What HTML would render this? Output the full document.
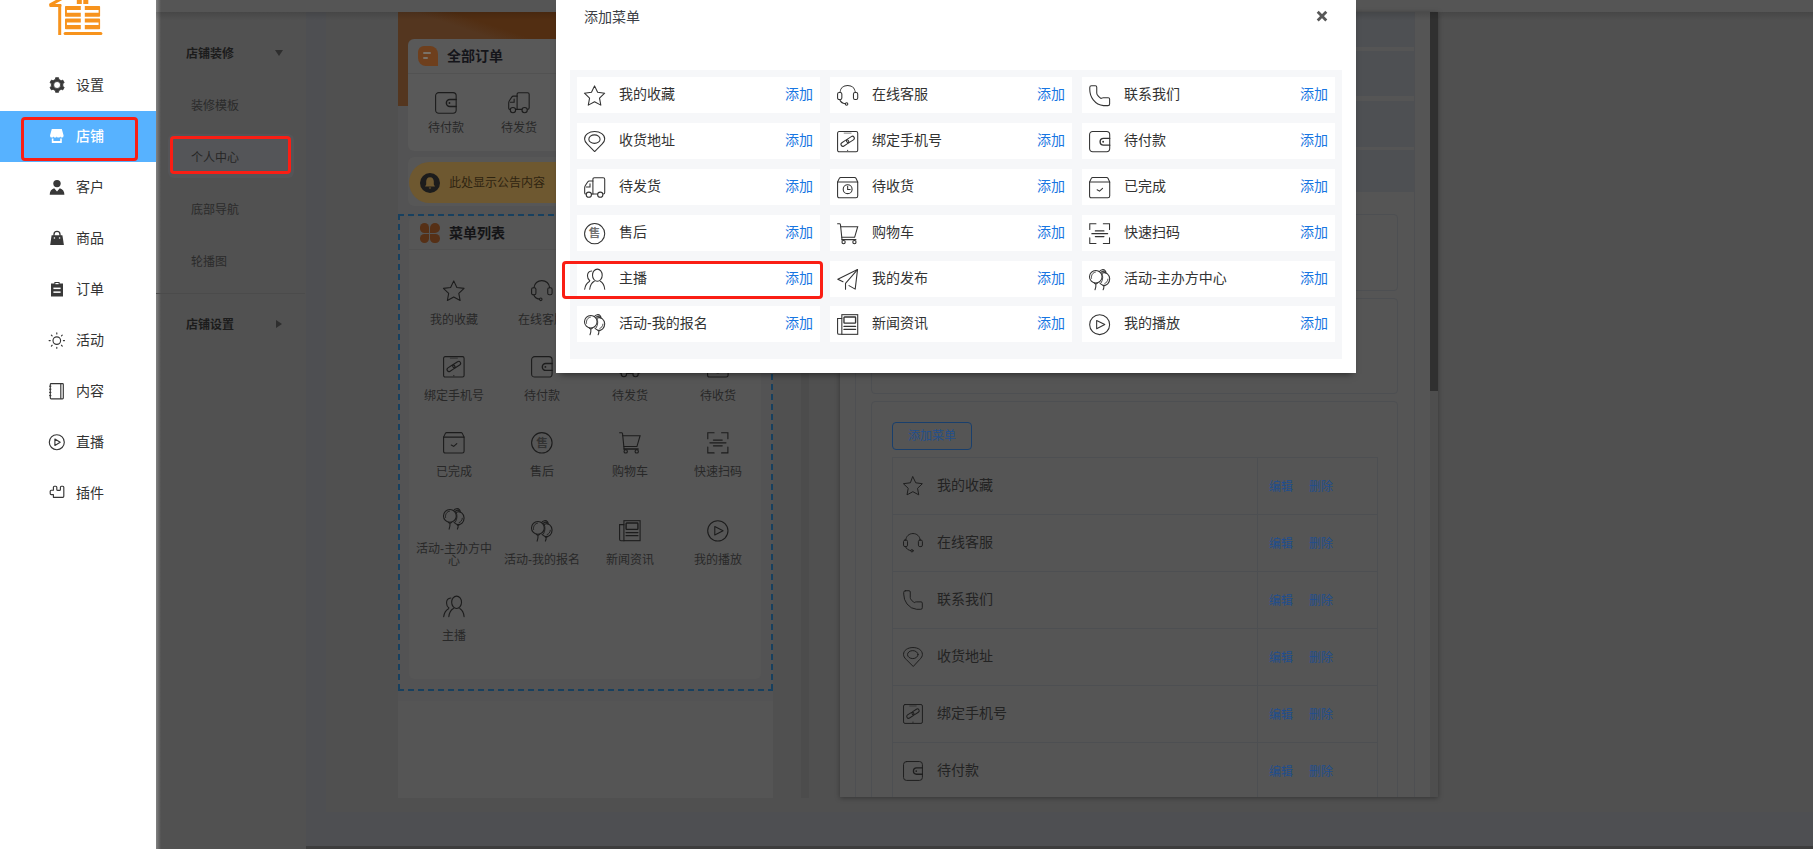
<!DOCTYPE html>
<html lang="zh-CN"><head><meta charset="utf-8"><title>添加菜单</title>
<style>
*{box-sizing:border-box;margin:0;padding:0}
html,body{width:1813px;height:849px;overflow:hidden}
body{position:relative;background:#515151;font-family:"Liberation Sans","Noto Sans CJK SC",sans-serif;font-size:14px;color:#333;-webkit-font-smoothing:antialiased}
.a{position:absolute}
.ic{position:absolute;overflow:visible}
.t{position:absolute;white-space:nowrap;line-height:20px;height:20px}
.shou{position:absolute;text-align:center;font-weight:700}
.c{text-align:center}
</style></head><body>

<div class="a" style="left:156px;top:0;width:1657px;height:12px;background:#555"></div>
<div class="a" style="left:306px;top:12px;width:1507px;height:834px;background:#4e4f52"></div>
<div class="a" style="left:326px;top:12px;width:1487px;height:800px;background:#505050"></div>
<div class="a" style="left:156px;top:12px;width:150px;height:837px;background:#515151"></div>
<div class="a" style="left:306px;top:846px;width:1507px;height:3px;background:#3d3d3d"></div>
<div class="a" style="left:156px;top:0;width:5px;height:849px;background:linear-gradient(90deg,#828282,rgba(130,130,130,0))"></div>
<div class="a" style="left:168px;top:134px;width:126px;height:44px;border-radius:6px;background:#545558"></div>
<div class="t" style="left:186px;top:44px;font-size:12px;color:#1c1c1c;font-weight:700;">店铺装修</div>
<div class="a" style="left:275px;top:50px;border-left:4.5px solid transparent;border-right:4.5px solid transparent;border-top:6px solid #2e2e2e"></div>
<div class="t" style="left:191px;top:96px;font-size:12px;color:#2b2b2b;">装修模板</div>
<div class="t" style="left:191px;top:148px;font-size:12px;color:#262626;">个人中心</div>
<div class="t" style="left:191px;top:200px;font-size:12px;color:#2b2b2b;">底部导航</div>
<div class="t" style="left:191px;top:252px;font-size:12px;color:#2b2b2b;">轮播图</div>
<div class="a" style="left:156px;top:293px;width:149px;height:1px;background:#4b4b4b"></div>
<div class="t" style="left:186px;top:315px;font-size:12px;color:#1c1c1c;font-weight:700;">店铺设置</div>
<div class="a" style="left:276px;top:320px;border-top:4.5px solid transparent;border-bottom:4.5px solid transparent;border-left:6px solid #2e2e2e"></div>
<div class="a" style="left:170px;top:136px;width:121px;height:38px;border:3px solid #fa1e14;border-radius:4px"></div>
<div class="a" style="left:398px;top:12px;width:375px;height:786px;background:#535354"></div>
<div class="a" style="left:398px;top:12px;width:375px;height:94px;background:linear-gradient(18.7deg,#54361f 45%,#522e12 51%)"></div>
<div class="a" style="left:408px;top:39px;width:354px;height:112px;border-radius:6px;background:#595959"></div>
<div class="a" style="left:408px;top:73px;width:354px;height:1px;background:#525252"></div>
<div class="a" style="left:418px;top:46px;width:20px;height:20px;border-radius:6px 8px 0 8px;background:#6e3f1d"></div>
<div class="a" style="left:423px;top:52px;width:8px;height:2px;border-radius:1px;background:#7a7268"></div>
<div class="a" style="left:423px;top:56.5px;width:5px;height:2px;border-radius:1px;background:#7a7268"></div>
<div class="t" style="left:447px;top:45.8px;font-weight:700;color:#15151a">全部订单</div>
<svg class="ic" style="left:435.26px;top:92.06px;color:#1c1c1c" width="21.78" height="21.78" viewBox="0 0 22 22"><g fill="none" stroke="currentColor" stroke-width="1.1" stroke-linecap="round"><rect x="0.6" y="0.6" width="20.8" height="20.8" rx="3.2"/><path d="M21.4 7.6H15A3.5 3.5 0 0 0 15 14.6H21.4" stroke-width="1.45"/><circle cx="14.6" cy="11.1" r="0.95" fill="currentColor" stroke="none"/></g></svg>
<svg class="ic" style="left:508.26px;top:92.06px;color:#1c1c1c" width="21.78" height="21.78" viewBox="0 0 22 22"><g fill="none" stroke="currentColor" stroke-width="1.1" stroke-linecap="round"><path d="M9.2 17.6V2.4Q9.2 0.8 10.8 0.8H19.8Q21.4 0.8 21.4 2.4V16Q21.4 17.6 20 17.6"/><path d="M9.2 4.2H5.6Q4.4 4.2 3.6 5.4L1.4 8.8Q0.7 9.9 0.7 11V16.4Q0.7 17.6 1.9 17.6H2.2M7.8 17.6H14"/><path d="M2.4 10.4H6.2V7"/><circle cx="5" cy="18.3" r="2.7"/><circle cx="16.8" cy="18.3" r="2.7"/></g></svg>
<div class="t c" style="left:402px;top:118px;width:88px;font-size:12px;color:#282828">待付款</div>
<div class="t c" style="left:475px;top:118px;width:88px;font-size:12px;color:#282828">待发货</div>
<div class="a" style="left:408px;top:157px;width:354px;height:49px;border-radius:6px;background:#575757"></div>
<div class="a" style="left:409px;top:162px;width:353px;height:41px;border-radius:21px 0 0 21px;background:#6e5830"></div>
<div class="a" style="left:420px;top:173px;width:20px;height:20px;border-radius:10px;background:#1c1c1c"></div>
<svg class="ic" style="left:420px;top:173px" width="20" height="20" viewBox="0 0 20 20"><path fill="#6e5830" d="M10 4.2C7.4 4.2 6.2 6.2 6.2 8.6V11.6L5 13.4H15L13.8 11.6V8.6C13.8 6.2 12.6 4.2 10 4.2ZM8.8 14.4H11.2Q11.2 15.6 10 15.6Q8.8 15.6 8.8 14.4Z"/></svg>
<div class="t" style="left:449px;top:173px;font-size:12px;color:#2e2410">此处显示公告内容</div>
<div class="a" style="left:398px;top:214px;width:375px;height:2px;background:repeating-linear-gradient(90deg,#17405f 0 6px,transparent 6px 10px)"></div>
<div class="a" style="left:398px;top:689px;width:375px;height:2px;background:repeating-linear-gradient(90deg,#17405f 0 6px,transparent 6px 10px)"></div>
<div class="a" style="left:398px;top:214px;width:2px;height:477px;background:repeating-linear-gradient(180deg,#17405f 0 6px,transparent 6px 10px)"></div>
<div class="a" style="left:771px;top:214px;width:2px;height:477px;background:repeating-linear-gradient(180deg,#17405f 0 6px,transparent 6px 10px)"></div>
<div class="a" style="left:409px;top:216px;width:352px;height:463px;border-radius:5px;background:#565656"></div>
<div class="a" style="left:409px;top:249px;width:352px;height:1px;background:#515151"></div>
<div class="a" style="left:419.8px;top:223px;width:9.6px;height:9.6px;border-radius:5px 5px 0 5px;background:#563016"></div>
<div class="a" style="left:430.4px;top:223px;width:9.6px;height:9.6px;border-radius:5px 5px 5px 0;background:#563016"></div>
<div class="a" style="left:419.8px;top:233.6px;width:9.6px;height:9.6px;border-radius:5px 0 5px 5px;background:#563016"></div>
<div class="a" style="left:430.4px;top:233.6px;width:9.6px;height:9.6px;border-radius:0 5px 5px 5px;background:#563016"></div>
<div class="t" style="left:449px;top:222.6px;font-weight:700;color:#141416">菜单列表</div>
<svg class="ic" style="left:443.26px;top:280.26px;color:#1c1c1c" width="21.68" height="21.68" viewBox="0 0 22 22"><g fill="none" stroke="currentColor" stroke-width="1.1" stroke-linecap="round"><path d="M10.90 0.90 L14.07 7.53 L21.36 8.50 L16.04 13.57 L17.37 20.80 L10.90 17.30 L4.43 20.80 L5.76 13.57 L0.44 8.50 L7.73 7.53Z" stroke-linejoin="round"/></g></svg>
<div class="t c" style="left:410px;top:310.2px;width:88px;font-size:12px;color:#282828">我的收藏</div>
<svg class="ic" style="left:531.26px;top:280.26px;color:#1c1c1c" width="21.68" height="21.68" viewBox="0 0 22 22"><g fill="none" stroke="currentColor" stroke-width="1.1" stroke-linecap="round"><path d="M3 7.8C3.4 3.4 6.8 0.6 11 0.6S18.6 3.4 19 7.8"/><rect x="0.6" y="7.8" width="4.4" height="7.2" rx="1.6"/><rect x="17" y="7.8" width="4.4" height="7.2" rx="1.6"/><path d="M2.8 15C3.6 17.6 5.8 19 8.6 19.4"/><circle cx="9.9" cy="19.6" r="1.3"/></g></svg>
<div class="t c" style="left:498px;top:310.2px;width:88px;font-size:12px;color:#282828">在线客服</div>
<svg class="ic" style="left:619.26px;top:280.26px;color:#1c1c1c" width="21.68" height="21.68" viewBox="0 0 22 22"><g fill="none" stroke="currentColor" stroke-width="1.1" stroke-linecap="round"><path d="M2.6 0.8H6.6Q8 0.8 8 2.2V8.2Q8 9.6 9.2 10.9Q10.4 12.2 11.6 13.4Q12.4 14.2 13.2 13.6Q13.8 13.1 14.8 13.1H19.9Q21.3 13.1 21.3 14.5V19.6Q21.3 21.3 19.6 21.3H15Q8.6 20.8 4.4 15.4Q0.8 10.6 0.8 4.6V2.6Q0.8 0.8 2.6 0.8Z" stroke-linejoin="round"/></g></svg>
<div class="t c" style="left:586px;top:310.2px;width:88px;font-size:12px;color:#282828">联系我们</div>
<svg class="ic" style="left:707.26px;top:280.26px;color:#1c1c1c" width="21.68" height="21.68" viewBox="0 0 22 22"><g fill="none" stroke="currentColor" stroke-width="1.1" stroke-linecap="round"><path d="M11 21.2L3.4 13.6C1.6 11.8 0.6 10.2 0.6 8.2C0.6 3.6 5.2 0.6 11 0.6S21.4 3.6 21.4 8.2C21.4 10.2 20.4 11.8 18.6 13.6Z" stroke-linejoin="round"/><ellipse cx="10.8" cy="8.4" rx="5.8" ry="4.4"/></g></svg>
<div class="t c" style="left:674px;top:310.2px;width:88px;font-size:12px;color:#282828">收货地址</div>
<svg class="ic" style="left:443.26px;top:356.26px;color:#1c1c1c" width="21.68" height="21.68" viewBox="0 0 22 22"><g fill="none" stroke="currentColor" stroke-width="1.1" stroke-linecap="round"><rect x="0.6" y="0.6" width="20.8" height="20.8" rx="1.6"/><path d="M7.4 2.2H14.6" stroke-width="0.9" opacity="0.7"/><circle cx="11" cy="20" r="0.6" fill="currentColor" stroke="none"/><g transform="rotate(-33 11 10.6)"><rect x="3.2" y="8.6" width="8.8" height="4" rx="2"/><rect x="10" y="8.6" width="8.8" height="4" rx="2"/></g></g></svg>
<div class="t c" style="left:410px;top:386.2px;width:88px;font-size:12px;color:#282828">绑定手机号</div>
<svg class="ic" style="left:531.26px;top:356.26px;color:#1c1c1c" width="21.68" height="21.68" viewBox="0 0 22 22"><g fill="none" stroke="currentColor" stroke-width="1.1" stroke-linecap="round"><rect x="0.6" y="0.6" width="20.8" height="20.8" rx="3.2"/><path d="M21.4 7.6H15A3.5 3.5 0 0 0 15 14.6H21.4" stroke-width="1.45"/><circle cx="14.6" cy="11.1" r="0.95" fill="currentColor" stroke="none"/></g></svg>
<div class="t c" style="left:498px;top:386.2px;width:88px;font-size:12px;color:#282828">待付款</div>
<svg class="ic" style="left:619.26px;top:356.26px;color:#1c1c1c" width="21.68" height="21.68" viewBox="0 0 22 22"><g fill="none" stroke="currentColor" stroke-width="1.1" stroke-linecap="round"><path d="M9.2 17.6V2.4Q9.2 0.8 10.8 0.8H19.8Q21.4 0.8 21.4 2.4V16Q21.4 17.6 20 17.6"/><path d="M9.2 4.2H5.6Q4.4 4.2 3.6 5.4L1.4 8.8Q0.7 9.9 0.7 11V16.4Q0.7 17.6 1.9 17.6H2.2M7.8 17.6H14"/><path d="M2.4 10.4H6.2V7"/><circle cx="5" cy="18.3" r="2.7"/><circle cx="16.8" cy="18.3" r="2.7"/></g></svg>
<div class="t c" style="left:586px;top:386.2px;width:88px;font-size:12px;color:#282828">待发货</div>
<svg class="ic" style="left:707.26px;top:356.26px;color:#1c1c1c" width="21.68" height="21.68" viewBox="0 0 22 22"><g fill="none" stroke="currentColor" stroke-width="1.1" stroke-linecap="round"><path d="M0.6 5.2L2.4 1.4Q2.8 0.6 3.8 0.6H18.2Q19.2 0.6 19.6 1.4L21.4 5.2"/><path d="M0.6 5.2H21.4V19.6Q21.4 21.4 19.6 21.4H2.4Q0.6 21.4 0.6 19.6Z" stroke-linejoin="round"/><circle cx="11" cy="12.6" r="4.6"/><path d="M11 9.6V13H13.6"/></g></svg>
<div class="t c" style="left:674px;top:386.2px;width:88px;font-size:12px;color:#282828">待收货</div>
<svg class="ic" style="left:443.26px;top:432.26px;color:#1c1c1c" width="21.68" height="21.68" viewBox="0 0 22 22"><g fill="none" stroke="currentColor" stroke-width="1.1" stroke-linecap="round"><path d="M0.6 5.2L2.4 1.4Q2.8 0.6 3.8 0.6H18.2Q19.2 0.6 19.6 1.4L21.4 5.2"/><path d="M0.6 5.2H21.4V19.6Q21.4 21.4 19.6 21.4H2.4Q0.6 21.4 0.6 19.6Z" stroke-linejoin="round"/><path d="M8.4 13.2L10.9 14.6L14 11.8"/></g></svg>
<div class="t c" style="left:410px;top:462.2px;width:88px;font-size:12px;color:#282828">已完成</div>
<svg class="ic" style="left:531.26px;top:432.26px;color:#1c1c1c" width="21.68" height="21.68" viewBox="0 0 22 22"><g fill="none" stroke="currentColor" stroke-width="1.1" stroke-linecap="round"><circle cx="11" cy="11" r="10.4"/></g></svg><span class="shou" style="left:531.258px;top:432.258px;width:21.6832px;height:21.6832px;line-height:21.6832px;font-size:11.7089px;color:#333">售</span>
<div class="t c" style="left:498px;top:462.2px;width:88px;font-size:12px;color:#282828">售后</div>
<svg class="ic" style="left:619.26px;top:432.26px;color:#1c1c1c" width="21.68" height="21.68" viewBox="0 0 22 22"><g fill="none" stroke="currentColor" stroke-width="1.1" stroke-linecap="round"><path d="M0.6 0.8H2.6Q3.4 0.8 3.6 1.8L5.2 17.6"/><path d="M3.8 3.8H21.4L18.2 14.8H5"/><path d="M5.2 17.2H19.4" stroke-width="1.4"/><circle cx="6.8" cy="19.7" r="1.7"/><circle cx="18" cy="19.7" r="1.7"/></g></svg>
<div class="t c" style="left:586px;top:462.2px;width:88px;font-size:12px;color:#282828">购物车</div>
<svg class="ic" style="left:707.26px;top:432.26px;color:#1c1c1c" width="21.68" height="21.68" viewBox="0 0 22 22"><g fill="none" stroke="currentColor" stroke-width="1.1" stroke-linecap="round"><path d="M0.8 6.8V0.8H7.2M14.8 0.8H21.2V6.8M21.2 15.2V21.2H14.8M7.2 21.2H0.8V15.2"/><path d="M6.6 8.2H15.4M3 11H19.2M6.6 14H15.4" stroke-width="1.3"/></g></svg>
<div class="t c" style="left:674px;top:462.2px;width:88px;font-size:12px;color:#282828">快速扫码</div>
<svg class="ic" style="left:443.26px;top:508.26px;color:#1c1c1c" width="21.68" height="21.68" viewBox="0 0 22 22"><g fill="none" stroke="currentColor" stroke-width="1.1" stroke-linecap="round"><circle cx="7" cy="8" r="6.5"/><path d="M2.6 9.6C2 6.2 4 3.6 6.6 3.2" stroke-width="0.9"/><path d="M5.6 14.8L7 15.6L8.6 14.8M7.1 15.6Q7.4 18.4 6.2 21.4"/><path d="M13.6 4.2C17.6 2.6 21.4 6 21.4 10.2C21.4 14.4 18.2 17.4 14.6 16.8C13.2 16.4 12 15.6 11.2 14.4"/><path d="M13.4 4.4C14.6 7.2 14.6 11 12.6 14.2" stroke-width="0.9"/><path d="M19.6 10.4C19.4 12.6 18.2 14.2 16.4 14.8" stroke-width="0.9"/><path d="M14.4 17L15.2 17.8L16.6 17M15.3 17.8Q15.6 19.6 14.6 21.4"/><path d="M10.8 2.6C12 0.4 15.2 0 16.8 1.8C17.4 2.6 17.6 3.4 17.4 4.2M12.4 3.4C13.6 2.2 15.4 2.2 16.4 3.2" /></g></svg>
<div class="t c" style="left:410px;top:542.5px;width:88px;font-size:12px;line-height:12.4px;height:auto;white-space:normal;padding:0 5px;color:#282828">活动-主办方中心</div>
<svg class="ic" style="left:531.26px;top:520.26px;color:#1c1c1c" width="21.68" height="21.68" viewBox="0 0 22 22"><g fill="none" stroke="currentColor" stroke-width="1.1" stroke-linecap="round"><circle cx="7" cy="8" r="6.5"/><path d="M2.6 9.6C2 6.2 4 3.6 6.6 3.2" stroke-width="0.9"/><path d="M5.6 14.8L7 15.6L8.6 14.8M7.1 15.6Q7.4 18.4 6.2 21.4"/><path d="M13.6 4.2C17.6 2.6 21.4 6 21.4 10.2C21.4 14.4 18.2 17.4 14.6 16.8C13.2 16.4 12 15.6 11.2 14.4"/><path d="M13.4 4.4C14.6 7.2 14.6 11 12.6 14.2" stroke-width="0.9"/><path d="M19.6 10.4C19.4 12.6 18.2 14.2 16.4 14.8" stroke-width="0.9"/><path d="M14.4 17L15.2 17.8L16.6 17M15.3 17.8Q15.6 19.6 14.6 21.4"/><path d="M10.8 2.6C12 0.4 15.2 0 16.8 1.8C17.4 2.6 17.6 3.4 17.4 4.2M12.4 3.4C13.6 2.2 15.4 2.2 16.4 3.2" /></g></svg>
<div class="t c" style="left:498px;top:550.2px;width:88px;font-size:12px;color:#282828">活动-我的报名</div>
<svg class="ic" style="left:619.26px;top:520.26px;color:#1c1c1c" width="21.68" height="21.68" viewBox="0 0 22 22"><g fill="none" stroke="currentColor" stroke-width="1.1" stroke-linecap="round"><rect x="5" y="0.7" width="16.4" height="20.3"/><path d="M5 4.7H0.6V19.6Q0.6 21 2 21H5"/><rect x="7.2" y="3.1" width="12" height="6.4" rx="0.6" stroke-width="1.4"/><path d="M7.2 12.8H19.2M7.2 15.9H19.2" stroke-width="1.3"/></g></svg>
<div class="t c" style="left:586px;top:550.2px;width:88px;font-size:12px;color:#282828">新闻资讯</div>
<svg class="ic" style="left:707.26px;top:520.26px;color:#1c1c1c" width="21.68" height="21.68" viewBox="0 0 22 22"><g fill="none" stroke="currentColor" stroke-width="1.1" stroke-linecap="round"><circle cx="11" cy="11" r="10.3"/><path d="M7.9 6.7V15.2L16.3 10.9Z" stroke-linejoin="round"/></g></svg>
<div class="t c" style="left:674px;top:550.2px;width:88px;font-size:12px;color:#282828">我的播放</div>
<svg class="ic" style="left:443.26px;top:596.26px;color:#1c1c1c" width="21.68" height="21.68" viewBox="0 0 22 22"><g fill="none" stroke="currentColor" stroke-width="1.1" stroke-linecap="round"><g transform="translate(0 -0.5)"><ellipse cx="13.8" cy="6.9" rx="5" ry="6.3"/><path d="M5.9 21.4C6.4 17.4 8 14.6 10.6 13.2M17 13.2C19.4 14.6 21 17.4 21.4 21.4"/><path d="M8 2.6C5.2 2.8 3.6 4.8 3.6 7.6C3.6 9.8 4.4 11.6 6 12.6M5.6 13.4C2.8 15 1.2 17.6 0.7 21.4"/></g></g></svg>
<div class="t c" style="left:410px;top:626.2px;width:88px;font-size:12px;color:#282828">主播</div>
<div class="a" style="left:398px;top:701px;width:375px;height:97px;background:#555555"></div>
<div class="a" style="left:801px;top:12px;width:8px;height:786px;background:#4c4c4c"></div>
<div class="a" style="left:840px;top:12px;width:598px;height:785px;background:#555555;box-shadow:0 1px 5px rgba(0,0,0,.35);overflow:hidden">
<div class="a" style="left:15px;top:0px;width:1px;height:785px;background:#4e4f52"></div>
<div class="a" style="left:574px;top:0px;width:1px;height:785px;background:#4e4f52"></div>
<div class="a" style="left:15px;top:0px;width:559px;height:34.5px;background:#4e5053"></div>
<div class="a" style="left:15px;top:39px;width:559px;height:44.5px;background:#4e5053"></div>
<div class="a" style="left:15px;top:88.5px;width:559px;height:46px;background:#4e5053"></div>
<div class="a" style="left:15px;top:137.5px;width:559px;height:42px;background:#4e5053"></div>
<div class="a" style="left:31px;top:202px;width:527px;height:77px;border:1px solid #4d4f52;border-radius:4px"></div>
<div class="a" style="left:31px;top:286px;width:527px;height:96px;border:1px solid #4d4f52;border-radius:4px"></div>
<div class="a" style="left:31px;top:389px;width:527px;height:420px;border:1px solid #4d4f52;border-radius:4px"></div>
<div class="a" style="left:52px;top:410px;width:80px;height:28px;border:1px solid #193f6c;border-radius:4px"></div>
<div class="t c" style="left:52px;top:413.6px;width:80px;font-size:12px;color:#234f8b">添加菜单</div>
<div class="a" style="left:52px;top:445px;width:486px;height:360px;border:1px solid #4d4f52"></div>
<div class="a" style="left:417px;top:445px;width:1px;height:360px;background:#4d4f52"></div>
<svg class="ic" style="left:63.13px;top:463.93px;color:#1e1e1e" width="19.94" height="19.94" viewBox="0 0 22 22"><g fill="none" stroke="currentColor" stroke-width="1.1" stroke-linecap="round"><path d="M10.90 0.90 L14.07 7.53 L21.36 8.50 L16.04 13.57 L17.37 20.80 L10.90 17.30 L4.43 20.80 L5.76 13.57 L0.44 8.50 L7.73 7.53Z" stroke-linejoin="round"/></g></svg>
<div class="t" style="left:97px;top:462.8px;color:#232323">我的收藏</div>
<div class="t" style="left:429px;top:464.8px;font-size:12px;color:#204e8e">编辑</div>
<div class="t" style="left:469px;top:464.8px;font-size:12px;color:#204e8e">删除</div>
<div class="a" style="left:52px;top:502px;width:486px;height:1px;background:#4d4f52"></div>
<svg class="ic" style="left:63.13px;top:520.93px;color:#1e1e1e" width="19.94" height="19.94" viewBox="0 0 22 22"><g fill="none" stroke="currentColor" stroke-width="1.1" stroke-linecap="round"><path d="M3 7.8C3.4 3.4 6.8 0.6 11 0.6S18.6 3.4 19 7.8"/><rect x="0.6" y="7.8" width="4.4" height="7.2" rx="1.6"/><rect x="17" y="7.8" width="4.4" height="7.2" rx="1.6"/><path d="M2.8 15C3.6 17.6 5.8 19 8.6 19.4"/><circle cx="9.9" cy="19.6" r="1.3"/></g></svg>
<div class="t" style="left:97px;top:519.8px;color:#232323">在线客服</div>
<div class="t" style="left:429px;top:521.8px;font-size:12px;color:#204e8e">编辑</div>
<div class="t" style="left:469px;top:521.8px;font-size:12px;color:#204e8e">删除</div>
<div class="a" style="left:52px;top:559px;width:486px;height:1px;background:#4d4f52"></div>
<svg class="ic" style="left:63.13px;top:577.93px;color:#1e1e1e" width="19.94" height="19.94" viewBox="0 0 22 22"><g fill="none" stroke="currentColor" stroke-width="1.1" stroke-linecap="round"><path d="M2.6 0.8H6.6Q8 0.8 8 2.2V8.2Q8 9.6 9.2 10.9Q10.4 12.2 11.6 13.4Q12.4 14.2 13.2 13.6Q13.8 13.1 14.8 13.1H19.9Q21.3 13.1 21.3 14.5V19.6Q21.3 21.3 19.6 21.3H15Q8.6 20.8 4.4 15.4Q0.8 10.6 0.8 4.6V2.6Q0.8 0.8 2.6 0.8Z" stroke-linejoin="round"/></g></svg>
<div class="t" style="left:97px;top:576.8px;color:#232323">联系我们</div>
<div class="t" style="left:429px;top:578.8px;font-size:12px;color:#204e8e">编辑</div>
<div class="t" style="left:469px;top:578.8px;font-size:12px;color:#204e8e">删除</div>
<div class="a" style="left:52px;top:616px;width:486px;height:1px;background:#4d4f52"></div>
<svg class="ic" style="left:63.13px;top:634.93px;color:#1e1e1e" width="19.94" height="19.94" viewBox="0 0 22 22"><g fill="none" stroke="currentColor" stroke-width="1.1" stroke-linecap="round"><path d="M11 21.2L3.4 13.6C1.6 11.8 0.6 10.2 0.6 8.2C0.6 3.6 5.2 0.6 11 0.6S21.4 3.6 21.4 8.2C21.4 10.2 20.4 11.8 18.6 13.6Z" stroke-linejoin="round"/><ellipse cx="10.8" cy="8.4" rx="5.8" ry="4.4"/></g></svg>
<div class="t" style="left:97px;top:633.8px;color:#232323">收货地址</div>
<div class="t" style="left:429px;top:635.8px;font-size:12px;color:#204e8e">编辑</div>
<div class="t" style="left:469px;top:635.8px;font-size:12px;color:#204e8e">删除</div>
<div class="a" style="left:52px;top:673px;width:486px;height:1px;background:#4d4f52"></div>
<svg class="ic" style="left:63.13px;top:691.93px;color:#1e1e1e" width="19.94" height="19.94" viewBox="0 0 22 22"><g fill="none" stroke="currentColor" stroke-width="1.1" stroke-linecap="round"><rect x="0.6" y="0.6" width="20.8" height="20.8" rx="1.6"/><path d="M7.4 2.2H14.6" stroke-width="0.9" opacity="0.7"/><circle cx="11" cy="20" r="0.6" fill="currentColor" stroke="none"/><g transform="rotate(-33 11 10.6)"><rect x="3.2" y="8.6" width="8.8" height="4" rx="2"/><rect x="10" y="8.6" width="8.8" height="4" rx="2"/></g></g></svg>
<div class="t" style="left:97px;top:690.8px;color:#232323">绑定手机号</div>
<div class="t" style="left:429px;top:692.8px;font-size:12px;color:#204e8e">编辑</div>
<div class="t" style="left:469px;top:692.8px;font-size:12px;color:#204e8e">删除</div>
<div class="a" style="left:52px;top:730px;width:486px;height:1px;background:#4d4f52"></div>
<svg class="ic" style="left:63.13px;top:748.93px;color:#1e1e1e" width="19.94" height="19.94" viewBox="0 0 22 22"><g fill="none" stroke="currentColor" stroke-width="1.1" stroke-linecap="round"><rect x="0.6" y="0.6" width="20.8" height="20.8" rx="3.2"/><path d="M21.4 7.6H15A3.5 3.5 0 0 0 15 14.6H21.4" stroke-width="1.45"/><circle cx="14.6" cy="11.1" r="0.95" fill="currentColor" stroke="none"/></g></svg>
<div class="t" style="left:97px;top:747.8px;color:#232323">待付款</div>
<div class="t" style="left:429px;top:749.8px;font-size:12px;color:#204e8e">编辑</div>
<div class="t" style="left:469px;top:749.8px;font-size:12px;color:#204e8e">删除</div>
<div class="a" style="left:590px;top:0px;width:8px;height:785px;background:#4e4e4e"></div>
<div class="a" style="left:590px;top:0px;width:8px;height:379px;background:#303030"></div>
</div>
<div class="a" style="left:156px;top:12px;width:1657px;height:8px;background:linear-gradient(rgba(0,0,0,.13),rgba(0,0,0,0))"></div>
<div class="a" style="left:0;top:0;width:156px;height:849px;background:#fff"></div>
<div class="a" style="left:0;top:111px;width:156px;height:51px;background:#57b2ff"></div>
<svg class="ic" style="left:40px;top:0" width="70" height="40" viewBox="40 0 70 40"><g fill="#f7931d">
<rect x="58.2" y="4" width="3" height="31"/>
<path d="M62 -1.6L50.6 4.6L50.8 5.6H60" fill="none" stroke="#f7931d" stroke-width="3" stroke-linejoin="round" stroke-linecap="round"/>
<rect x="76.8" y="0" width="5" height="4"/><rect x="83.3" y="0" width="5" height="4"/>
<path d="M65.8 5.9H80.8V10H66.9V12.8H80.8V16.8H65.8Q65 16.8 65 16V6.7Q65 5.9 65.8 5.9Z"/>
<path d="M84.8 5.9H99.3Q100.1 5.9 100.1 6.7V16Q100.1 16.8 99.3 16.8H84.8V12.8H98.6V10H84.8Z"/>
<path d="M65.8 18.6H80.8V22.4H66.9V25H80.8V29.2H65.8Q65 29.2 65 28.4V19.4Q65 18.6 65.8 18.6Z"/>
<path d="M84.8 18.6H99.3Q100.1 18.6 100.1 19.4V28.4Q100.1 29.2 99.3 29.2H84.8V25H98.6V22.4H84.8Z"/>
<rect x="63.6" y="31.9" width="38.8" height="3" rx="1.5"/>
</g></svg>
<svg class="ic" style="left:48px;top:76px" width="18" height="18" viewBox="48 76 18 18"><path fill="#383838" fill-rule="evenodd" stroke="#383838" stroke-width="0.8" stroke-linejoin="round" d="M55.42 79.34 L55.62 77.65 L58.58 77.65 L58.78 79.34 L61.16 80.72 L62.73 80.04 L64.21 82.61 L62.84 83.62 L62.84 86.38 L64.21 87.39 L62.73 89.96 L61.16 89.28 L58.78 90.66 L58.58 92.35 L55.62 92.35 L55.42 90.66 L53.04 89.28 L51.47 89.96 L49.99 87.39 L51.36 86.38 L51.36 83.62 L49.99 82.61 L51.47 80.04 L53.04 80.72Z M53.60 85.00A3.50 3.50 0 1 0 60.60 85.00A3.50 3.50 0 1 0 53.60 85.00Z"/></svg>
<svg class="ic" style="left:48px;top:127px" width="18" height="18" viewBox="48 127 18 18"><g fill="#fff">
<path d="M51.8 128.9H61.8L63.6 135.4Q63.6 137.6 61.9 137.6Q60.6 137.6 60.2 136.4Q59.8 137.6 58.5 137.6Q57.2 137.6 56.8 136.4Q56.4 137.6 55.1 137.6Q53.8 137.6 53.4 136.4Q53 137.6 51.7 137.6Q50 137.6 50 135.4Z"/>
<path d="M51.8 138.6V143H61.8V138.6H60.2V141H53.4V138.6Z"/>
</g></svg>
<svg class="ic" style="left:48px;top:178px" width="18" height="18" viewBox="48 178 18 18"><g fill="#383838">
<circle cx="57" cy="183.6" r="3.7"/>
<path d="M49.7 194.7Q49.7 189.6 54.2 188.2L57 191.4L59.8 188.2Q64.4 189.6 64.4 194.7Z"/>
</g></svg>
<svg class="ic" style="left:48px;top:229px" width="18" height="18" viewBox="48 229 18 18">
<path fill="none" stroke="#383838" stroke-width="1.3" d="M54 236.5V234.4A3 3 0 0 1 60 234.4V236.5"/>
<path fill="#383838" d="M51.6 235.2H62.4L63.9 244.9H50.2Z"/>
<circle cx="54.4" cy="238" r="0.8" fill="#fff"/><circle cx="59.6" cy="238" r="0.8" fill="#fff"/>
</svg>
<svg class="ic" style="left:48px;top:280px" width="18" height="18" viewBox="48 280 18 18">
<path fill="#383838" d="M51 283.4H54.4V282H59.6V283.4H63V296.6H51Z"/>
<rect x="53.4" y="287.6" width="7.2" height="1.5" fill="#fff"/><rect x="53.4" y="291.4" width="7.2" height="1.5" fill="#fff"/>
<rect x="55.4" y="283" width="3.2" height="1.2" fill="#fff"/>
</svg>
<svg class="ic" style="left:48px;top:331px" width="18" height="18" viewBox="48 331 18 18"><g fill="none" stroke="#363636" stroke-width="1.15" stroke-linecap="round"><circle cx="56.8" cy="340.6" r="3.8"/><path d="M63.40 340.60L64.50 340.60M61.47 345.27L62.24 346.04M56.80 347.20L56.80 348.30M52.13 345.27L51.36 346.04M50.20 340.60L49.10 340.60M52.13 335.93L51.36 335.16M56.80 334.00L56.80 332.90M61.47 335.93L62.24 335.16"/></g></svg>
<svg class="ic" style="left:48px;top:382px" width="18" height="18" viewBox="48 382 18 18"><g fill="none" stroke="#363636" stroke-width="1.15">
<rect x="50.3" y="383.6" width="13" height="15.2" rx="0.8"/><path d="M60.8 383.6V398.8"/>
<path d="M49 386.2H51.4M49 389.2H51.4M49 392.4H51.4M49 395.6H51.4" stroke-width="0.9"/></g></svg>
<svg class="ic" style="left:48px;top:433px" width="18" height="18" viewBox="48 433 18 18"><g fill="none" stroke="#363636" stroke-width="1.15" stroke-linejoin="round">
<circle cx="56.8" cy="442.2" r="7.5"/><path d="M54.9 439V445.4L60.2 442.2Z"/></g></svg>
<svg class="ic" style="left:48px;top:484px" width="18" height="18" viewBox="48 484 18 18"><g fill="none" stroke="#363636" stroke-width="1.15" stroke-linejoin="round">
<path d="M53.4 487.2Q53.4 486.2 54.4 486.2H55.8Q56.8 486.2 56.8 487.2V489.4Q56.8 490.4 57.8 490.4H59.4Q60.4 490.4 60.4 489.4V487.2Q60.4 486.2 61.4 486.2H62.8Q63.8 486.2 63.8 487.2V496.3Q63.8 497.3 62.8 497.3H53.4V494.6H51.2Q50.2 494.6 50.2 493.6V491.2Q50.2 490.2 51.2 490.2H53.4Z"/></g></svg>
<div class="t" style="left:76px;top:75px;color:#333">设置</div>
<div class="t" style="left:76px;top:126px;color:#fff;font-weight:500">店铺</div>
<div class="t" style="left:76px;top:177px;color:#333">客户</div>
<div class="t" style="left:76px;top:228px;color:#333">商品</div>
<div class="t" style="left:76px;top:279px;color:#333">订单</div>
<div class="t" style="left:76px;top:330px;color:#333">活动</div>
<div class="t" style="left:76px;top:381px;color:#333">内容</div>
<div class="t" style="left:76px;top:432px;color:#333">直播</div>
<div class="t" style="left:76px;top:483px;color:#333">插件</div>
<div class="a" style="left:21px;top:117px;width:117px;height:44px;border:3px solid #fa1e14;border-radius:4px"></div>
<div class="a" style="left:556px;top:0;width:800px;height:372.6px;background:#fff;box-shadow:0 5px 7px -4px rgba(0,0,0,.55)"></div>
<div class="t" style="left:584px;top:7px;color:#3c4046">添加菜单</div>
<svg class="ic" style="left:1316px;top:9.9px" width="12" height="12" viewBox="0 0 12 12"><path d="M1.7 1.8L10.3 10.6M10.3 1.8L1.7 10.6" stroke="#585858" stroke-width="2.8" fill="none"/></svg>
<div class="a" style="left:570px;top:70px;width:772px;height:288.7px;background:#f6f7f9"></div>
<div class="a" style="left:576.7px;top:76.9px;width:243.3px;height:35.9px;background:#fff"></div>
<svg class="ic" style="left:583.95px;top:84.85px;color:#333" width="21.30" height="21.30" viewBox="0 0 22 22"><g fill="none" stroke="currentColor" stroke-width="1.1" stroke-linecap="round"><path d="M10.90 0.90 L14.07 7.53 L21.36 8.50 L16.04 13.57 L17.37 20.80 L10.90 17.30 L4.43 20.80 L5.76 13.57 L0.44 8.50 L7.73 7.53Z" stroke-linejoin="round"/></g></svg>
<div class="t" style="left:619px;top:84.2px;color:#333">我的收藏</div>
<div class="t" style="left:785px;top:84.2px;color:#1876e2">添加</div>
<div class="a" style="left:829.7px;top:76.9px;width:242.3px;height:35.9px;background:#fff"></div>
<svg class="ic" style="left:836.95px;top:84.85px;color:#333" width="21.30" height="21.30" viewBox="0 0 22 22"><g fill="none" stroke="currentColor" stroke-width="1.1" stroke-linecap="round"><path d="M3 7.8C3.4 3.4 6.8 0.6 11 0.6S18.6 3.4 19 7.8"/><rect x="0.6" y="7.8" width="4.4" height="7.2" rx="1.6"/><rect x="17" y="7.8" width="4.4" height="7.2" rx="1.6"/><path d="M2.8 15C3.6 17.6 5.8 19 8.6 19.4"/><circle cx="9.9" cy="19.6" r="1.3"/></g></svg>
<div class="t" style="left:872px;top:84.2px;color:#333">在线客服</div>
<div class="t" style="left:1037px;top:84.2px;color:#1876e2">添加</div>
<div class="a" style="left:1081.7px;top:76.9px;width:253.3px;height:35.9px;background:#fff"></div>
<svg class="ic" style="left:1088.95px;top:84.85px;color:#333" width="21.30" height="21.30" viewBox="0 0 22 22"><g fill="none" stroke="currentColor" stroke-width="1.1" stroke-linecap="round"><path d="M2.6 0.8H6.6Q8 0.8 8 2.2V8.2Q8 9.6 9.2 10.9Q10.4 12.2 11.6 13.4Q12.4 14.2 13.2 13.6Q13.8 13.1 14.8 13.1H19.9Q21.3 13.1 21.3 14.5V19.6Q21.3 21.3 19.6 21.3H15Q8.6 20.8 4.4 15.4Q0.8 10.6 0.8 4.6V2.6Q0.8 0.8 2.6 0.8Z" stroke-linejoin="round"/></g></svg>
<div class="t" style="left:1124px;top:84.2px;color:#333">联系我们</div>
<div class="t" style="left:1300px;top:84.2px;color:#1876e2">添加</div>
<div class="a" style="left:576.7px;top:123px;width:243.3px;height:35.9px;background:#fff"></div>
<svg class="ic" style="left:583.95px;top:130.95px;color:#333" width="21.30" height="21.30" viewBox="0 0 22 22"><g fill="none" stroke="currentColor" stroke-width="1.1" stroke-linecap="round"><path d="M11 21.2L3.4 13.6C1.6 11.8 0.6 10.2 0.6 8.2C0.6 3.6 5.2 0.6 11 0.6S21.4 3.6 21.4 8.2C21.4 10.2 20.4 11.8 18.6 13.6Z" stroke-linejoin="round"/><ellipse cx="10.8" cy="8.4" rx="5.8" ry="4.4"/></g></svg>
<div class="t" style="left:619px;top:130.3px;color:#333">收货地址</div>
<div class="t" style="left:785px;top:130.3px;color:#1876e2">添加</div>
<div class="a" style="left:829.7px;top:123px;width:242.3px;height:35.9px;background:#fff"></div>
<svg class="ic" style="left:836.95px;top:130.95px;color:#333" width="21.30" height="21.30" viewBox="0 0 22 22"><g fill="none" stroke="currentColor" stroke-width="1.1" stroke-linecap="round"><rect x="0.6" y="0.6" width="20.8" height="20.8" rx="1.6"/><path d="M7.4 2.2H14.6" stroke-width="0.9" opacity="0.7"/><circle cx="11" cy="20" r="0.6" fill="currentColor" stroke="none"/><g transform="rotate(-33 11 10.6)"><rect x="3.2" y="8.6" width="8.8" height="4" rx="2"/><rect x="10" y="8.6" width="8.8" height="4" rx="2"/></g></g></svg>
<div class="t" style="left:872px;top:130.3px;color:#333">绑定手机号</div>
<div class="t" style="left:1037px;top:130.3px;color:#1876e2">添加</div>
<div class="a" style="left:1081.7px;top:123px;width:253.3px;height:35.9px;background:#fff"></div>
<svg class="ic" style="left:1088.95px;top:130.95px;color:#333" width="21.30" height="21.30" viewBox="0 0 22 22"><g fill="none" stroke="currentColor" stroke-width="1.1" stroke-linecap="round"><rect x="0.6" y="0.6" width="20.8" height="20.8" rx="3.2"/><path d="M21.4 7.6H15A3.5 3.5 0 0 0 15 14.6H21.4" stroke-width="1.45"/><circle cx="14.6" cy="11.1" r="0.95" fill="currentColor" stroke="none"/></g></svg>
<div class="t" style="left:1124px;top:130.3px;color:#333">待付款</div>
<div class="t" style="left:1300px;top:130.3px;color:#1876e2">添加</div>
<div class="a" style="left:576.7px;top:169px;width:243.3px;height:35.9px;background:#fff"></div>
<svg class="ic" style="left:583.95px;top:176.95px;color:#333" width="21.30" height="21.30" viewBox="0 0 22 22"><g fill="none" stroke="currentColor" stroke-width="1.1" stroke-linecap="round"><path d="M9.2 17.6V2.4Q9.2 0.8 10.8 0.8H19.8Q21.4 0.8 21.4 2.4V16Q21.4 17.6 20 17.6"/><path d="M9.2 4.2H5.6Q4.4 4.2 3.6 5.4L1.4 8.8Q0.7 9.9 0.7 11V16.4Q0.7 17.6 1.9 17.6H2.2M7.8 17.6H14"/><path d="M2.4 10.4H6.2V7"/><circle cx="5" cy="18.3" r="2.7"/><circle cx="16.8" cy="18.3" r="2.7"/></g></svg>
<div class="t" style="left:619px;top:176.3px;color:#333">待发货</div>
<div class="t" style="left:785px;top:176.3px;color:#1876e2">添加</div>
<div class="a" style="left:829.7px;top:169px;width:242.3px;height:35.9px;background:#fff"></div>
<svg class="ic" style="left:836.95px;top:176.95px;color:#333" width="21.30" height="21.30" viewBox="0 0 22 22"><g fill="none" stroke="currentColor" stroke-width="1.1" stroke-linecap="round"><path d="M0.6 5.2L2.4 1.4Q2.8 0.6 3.8 0.6H18.2Q19.2 0.6 19.6 1.4L21.4 5.2"/><path d="M0.6 5.2H21.4V19.6Q21.4 21.4 19.6 21.4H2.4Q0.6 21.4 0.6 19.6Z" stroke-linejoin="round"/><circle cx="11" cy="12.6" r="4.6"/><path d="M11 9.6V13H13.6"/></g></svg>
<div class="t" style="left:872px;top:176.3px;color:#333">待收货</div>
<div class="t" style="left:1037px;top:176.3px;color:#1876e2">添加</div>
<div class="a" style="left:1081.7px;top:169px;width:253.3px;height:35.9px;background:#fff"></div>
<svg class="ic" style="left:1088.95px;top:176.95px;color:#333" width="21.30" height="21.30" viewBox="0 0 22 22"><g fill="none" stroke="currentColor" stroke-width="1.1" stroke-linecap="round"><path d="M0.6 5.2L2.4 1.4Q2.8 0.6 3.8 0.6H18.2Q19.2 0.6 19.6 1.4L21.4 5.2"/><path d="M0.6 5.2H21.4V19.6Q21.4 21.4 19.6 21.4H2.4Q0.6 21.4 0.6 19.6Z" stroke-linejoin="round"/><path d="M8.4 13.2L10.9 14.6L14 11.8"/></g></svg>
<div class="t" style="left:1124px;top:176.3px;color:#333">已完成</div>
<div class="t" style="left:1300px;top:176.3px;color:#1876e2">添加</div>
<div class="a" style="left:576.7px;top:214.9px;width:243.3px;height:35.9px;background:#fff"></div>
<svg class="ic" style="left:583.95px;top:222.85px;color:#333" width="21.30" height="21.30" viewBox="0 0 22 22"><g fill="none" stroke="currentColor" stroke-width="1.1" stroke-linecap="round"><circle cx="11" cy="11" r="10.4"/></g></svg><span class="shou" style="left:583.952px;top:222.852px;width:21.296px;height:21.296px;line-height:21.296px;font-size:11.4998px;color:#707070">售</span>
<div class="t" style="left:619px;top:222.2px;color:#333">售后</div>
<div class="t" style="left:785px;top:222.2px;color:#1876e2">添加</div>
<div class="a" style="left:829.7px;top:214.9px;width:242.3px;height:35.9px;background:#fff"></div>
<svg class="ic" style="left:836.95px;top:222.85px;color:#333" width="21.30" height="21.30" viewBox="0 0 22 22"><g fill="none" stroke="currentColor" stroke-width="1.1" stroke-linecap="round"><path d="M0.6 0.8H2.6Q3.4 0.8 3.6 1.8L5.2 17.6"/><path d="M3.8 3.8H21.4L18.2 14.8H5"/><path d="M5.2 17.2H19.4" stroke-width="1.4"/><circle cx="6.8" cy="19.7" r="1.7"/><circle cx="18" cy="19.7" r="1.7"/></g></svg>
<div class="t" style="left:872px;top:222.2px;color:#333">购物车</div>
<div class="t" style="left:1037px;top:222.2px;color:#1876e2">添加</div>
<div class="a" style="left:1081.7px;top:214.9px;width:253.3px;height:35.9px;background:#fff"></div>
<svg class="ic" style="left:1088.95px;top:222.85px;color:#333" width="21.30" height="21.30" viewBox="0 0 22 22"><g fill="none" stroke="currentColor" stroke-width="1.1" stroke-linecap="round"><path d="M0.8 6.8V0.8H7.2M14.8 0.8H21.2V6.8M21.2 15.2V21.2H14.8M7.2 21.2H0.8V15.2"/><path d="M6.6 8.2H15.4M3 11H19.2M6.6 14H15.4" stroke-width="1.3"/></g></svg>
<div class="t" style="left:1124px;top:222.2px;color:#333">快速扫码</div>
<div class="t" style="left:1300px;top:222.2px;color:#1876e2">添加</div>
<div class="a" style="left:576.7px;top:260.7px;width:243.3px;height:35.9px;background:#fff"></div>
<svg class="ic" style="left:583.95px;top:268.65px;color:#333" width="21.30" height="21.30" viewBox="0 0 22 22"><g fill="none" stroke="currentColor" stroke-width="1.1" stroke-linecap="round"><g transform="translate(0 -0.5)"><ellipse cx="13.8" cy="6.9" rx="5" ry="6.3"/><path d="M5.9 21.4C6.4 17.4 8 14.6 10.6 13.2M17 13.2C19.4 14.6 21 17.4 21.4 21.4"/><path d="M8 2.6C5.2 2.8 3.6 4.8 3.6 7.6C3.6 9.8 4.4 11.6 6 12.6M5.6 13.4C2.8 15 1.2 17.6 0.7 21.4"/></g></g></svg>
<div class="t" style="left:619px;top:268px;color:#333">主播</div>
<div class="t" style="left:785px;top:268px;color:#1876e2">添加</div>
<div class="a" style="left:829.7px;top:260.7px;width:242.3px;height:35.9px;background:#fff"></div>
<svg class="ic" style="left:836.95px;top:268.65px;color:#333" width="21.30" height="21.30" viewBox="0 0 22 22"><g fill="none" stroke="currentColor" stroke-width="1.1" stroke-linecap="round"><path d="M6.2 13.2L0.8 10.6L21.2 0.6L18.8 20.8L12.4 17.2" stroke-linejoin="round"/><path d="M21.2 0.6L8.8 14.8V20.8" stroke-linejoin="round"/></g></svg>
<div class="t" style="left:872px;top:268px;color:#333">我的发布</div>
<div class="t" style="left:1037px;top:268px;color:#1876e2">添加</div>
<div class="a" style="left:1081.7px;top:260.7px;width:253.3px;height:35.9px;background:#fff"></div>
<svg class="ic" style="left:1088.95px;top:268.65px;color:#333" width="21.30" height="21.30" viewBox="0 0 22 22"><g fill="none" stroke="currentColor" stroke-width="1.1" stroke-linecap="round"><circle cx="7" cy="8" r="6.5"/><path d="M2.6 9.6C2 6.2 4 3.6 6.6 3.2" stroke-width="0.9"/><path d="M5.6 14.8L7 15.6L8.6 14.8M7.1 15.6Q7.4 18.4 6.2 21.4"/><path d="M13.6 4.2C17.6 2.6 21.4 6 21.4 10.2C21.4 14.4 18.2 17.4 14.6 16.8C13.2 16.4 12 15.6 11.2 14.4"/><path d="M13.4 4.4C14.6 7.2 14.6 11 12.6 14.2" stroke-width="0.9"/><path d="M19.6 10.4C19.4 12.6 18.2 14.2 16.4 14.8" stroke-width="0.9"/><path d="M14.4 17L15.2 17.8L16.6 17M15.3 17.8Q15.6 19.6 14.6 21.4"/><path d="M10.8 2.6C12 0.4 15.2 0 16.8 1.8C17.4 2.6 17.6 3.4 17.4 4.2M12.4 3.4C13.6 2.2 15.4 2.2 16.4 3.2" /></g></svg>
<div class="t" style="left:1124px;top:268px;color:#333">活动-主办方中心</div>
<div class="t" style="left:1300px;top:268px;color:#1876e2">添加</div>
<div class="a" style="left:576.7px;top:306.1px;width:243.3px;height:35.9px;background:#fff"></div>
<svg class="ic" style="left:583.95px;top:314.05px;color:#333" width="21.30" height="21.30" viewBox="0 0 22 22"><g fill="none" stroke="currentColor" stroke-width="1.1" stroke-linecap="round"><circle cx="7" cy="8" r="6.5"/><path d="M2.6 9.6C2 6.2 4 3.6 6.6 3.2" stroke-width="0.9"/><path d="M5.6 14.8L7 15.6L8.6 14.8M7.1 15.6Q7.4 18.4 6.2 21.4"/><path d="M13.6 4.2C17.6 2.6 21.4 6 21.4 10.2C21.4 14.4 18.2 17.4 14.6 16.8C13.2 16.4 12 15.6 11.2 14.4"/><path d="M13.4 4.4C14.6 7.2 14.6 11 12.6 14.2" stroke-width="0.9"/><path d="M19.6 10.4C19.4 12.6 18.2 14.2 16.4 14.8" stroke-width="0.9"/><path d="M14.4 17L15.2 17.8L16.6 17M15.3 17.8Q15.6 19.6 14.6 21.4"/><path d="M10.8 2.6C12 0.4 15.2 0 16.8 1.8C17.4 2.6 17.6 3.4 17.4 4.2M12.4 3.4C13.6 2.2 15.4 2.2 16.4 3.2" /></g></svg>
<div class="t" style="left:619px;top:313.4px;color:#333">活动-我的报名</div>
<div class="t" style="left:785px;top:313.4px;color:#1876e2">添加</div>
<div class="a" style="left:829.7px;top:306.1px;width:242.3px;height:35.9px;background:#fff"></div>
<svg class="ic" style="left:836.95px;top:314.05px;color:#333" width="21.30" height="21.30" viewBox="0 0 22 22"><g fill="none" stroke="currentColor" stroke-width="1.1" stroke-linecap="round"><rect x="5" y="0.7" width="16.4" height="20.3"/><path d="M5 4.7H0.6V19.6Q0.6 21 2 21H5"/><rect x="7.2" y="3.1" width="12" height="6.4" rx="0.6" stroke-width="1.4"/><path d="M7.2 12.8H19.2M7.2 15.9H19.2" stroke-width="1.3"/></g></svg>
<div class="t" style="left:872px;top:313.4px;color:#333">新闻资讯</div>
<div class="t" style="left:1037px;top:313.4px;color:#1876e2">添加</div>
<div class="a" style="left:1081.7px;top:306.1px;width:253.3px;height:35.9px;background:#fff"></div>
<svg class="ic" style="left:1088.95px;top:314.05px;color:#333" width="21.30" height="21.30" viewBox="0 0 22 22"><g fill="none" stroke="currentColor" stroke-width="1.1" stroke-linecap="round"><circle cx="11" cy="11" r="10.3"/><path d="M7.9 6.7V15.2L16.3 10.9Z" stroke-linejoin="round"/></g></svg>
<div class="t" style="left:1124px;top:313.4px;color:#333">我的播放</div>
<div class="t" style="left:1300px;top:313.4px;color:#1876e2">添加</div>
<div class="a" style="left:562px;top:261px;width:261px;height:38px;border:3px solid #fa1e14;border-radius:4px"></div>
</body></html>
